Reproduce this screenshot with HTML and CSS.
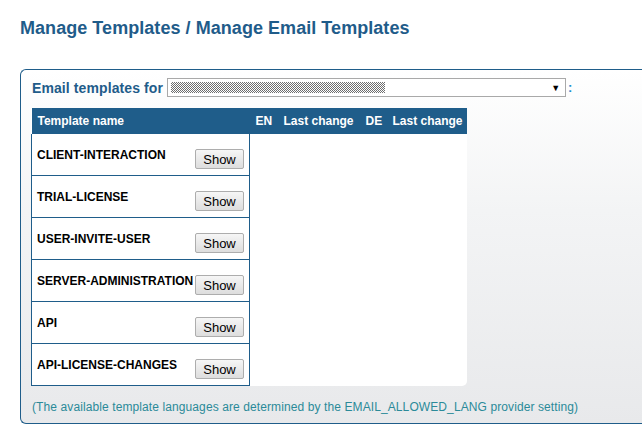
FILE: index.html
```html
<!DOCTYPE html>
<html>
<head>
<meta charset="utf-8">
<link rel="stylesheet" href="styles.css">
</head>
<body>
<h1 class="title">Manage Templates / Manage Email Templates</h1>
<div class="panel">
  <div class="picker">
    <span class="picker-label">Email templates for</span>
    <div class="select">
      <span class="redacted"></span>
      <span class="arrow">&#9660;</span>
    </div>
    <span class="colon">:</span>
  </div>
  <div class="table-wrap">
    <table class="tpl">
      <colgroup>
        <col class="w-name">
        <col class="w-en">
        <col class="w-lc1">
        <col class="w-de">
        <col class="w-lc2">
      </colgroup>
      <thead>
        <tr>
          <th>Template name</th>
          <th>EN</th>
          <th>Last change</th>
          <th>DE</th>
          <th>Last change</th>
        </tr>
      </thead>
      <tbody>
        <tr><td class="c-name"><div class="cell"><span class="lbl">CLIENT-INTERACTION</span><button class="btn">Show</button></div></td><td colspan="4"></td></tr>
        <tr><td class="c-name"><div class="cell"><span class="lbl">TRIAL-LICENSE</span><button class="btn">Show</button></div></td><td colspan="4"></td></tr>
        <tr><td class="c-name"><div class="cell"><span class="lbl">USER-INVITE-USER</span><button class="btn">Show</button></div></td><td colspan="4"></td></tr>
        <tr><td class="c-name"><div class="cell"><span class="lbl">SERVER-ADMINISTRATION</span><button class="btn">Show</button></div></td><td colspan="4"></td></tr>
        <tr><td class="c-name"><div class="cell"><span class="lbl">API</span><button class="btn">Show</button></div></td><td colspan="4"></td></tr>
        <tr><td class="c-name"><div class="cell"><span class="lbl">API-LICENSE-CHANGES</span><button class="btn">Show</button></div></td><td colspan="4"></td></tr>
      </tbody>
    </table>
  </div>
  <p class="note">(The available template languages are determined by the EMAIL_ALLOWED_LANG provider setting)</p>
</div>
</body>
</html>
```

FILE: styles.css
```css
html, body {
  margin: 0;
  padding: 0;
  background: #fff;
  font-family: "Liberation Sans", Arial, sans-serif;
}
.title {
  margin: 0;
  padding: 17px 0 0 20px;
  font-size: 18px;
  font-weight: bold;
  color: #1f5c8a;
  line-height: 22px;
  letter-spacing: 0.05px;
}
.panel {
  margin: 30px 0 0 20px;
  border: 1px solid #1f5d8a;
  border-right: none;
  border-radius: 6px 0 0 6px;
  background: linear-gradient(to bottom, #ffffff 0%, #f3f4f5 40%, #e8e9eb 100%);
  padding: 8px 0 0 10px;
  height: 345px;
  box-sizing: content-box;
}
.picker {
  display: flex;
  align-items: center;
  height: 19px;
}
.picker-label {
  font-size: 14px;
  font-weight: bold;
  color: #1f5c8a;
  margin-left: 1px;
  margin-right: 4px;
  letter-spacing: 0.1px;
}
.select {
  width: 397px;
  height: 17px;
  border: 1px solid #a9a9a9;
  background: #fff;
  display: flex;
  align-items: center;
}
.redacted {
  display: block;
  width: 214px;
  height: 11px;
  margin-left: 3px;
  background: repeating-conic-gradient(#6e6e6e 0 25%, #ffffff 0 50%) 0 0 / 2px 2px;
}
.arrow {
  margin-left: auto;
  margin-right: 5px;
  font-size: 9px;
  color: #000;
}
.colon {
  font-size: 13px;
  font-weight: bold;
  color: #1f8fcf;
  margin-left: 2px;
}
.table-wrap {
  margin-top: 11px;
  width: 436px;
  background: #fff;
  border-radius: 0 0 5px 0;
  overflow: hidden;
}
.tpl {
  border-collapse: collapse;
  table-layout: fixed;
  width: 436px;
}
.w-name { width: 218px; }
.w-en { width: 28px; }
.w-lc1 { width: 82px; }
.w-de { width: 27px; }
.w-lc2 { width: 81px; }
.tpl th {
  background: #1f5d8a;
  color: #fff;
  font-size: 12px;
  font-weight: bold;
  text-align: left;
  height: 26px;
  padding: 0 6px;
  white-space: nowrap;
}
.tpl td {
  padding: 0;
  height: 41px;
  vertical-align: top;
}
.tpl td.c-name {
  border: 1px solid #1f5d8a;
  border-top: none;
}
.cell {
  display: flex;
  align-items: flex-start;
  padding: 14px 5px 0 5px;
}
.lbl {
  font-size: 12px;
  font-weight: bold;
  color: #000;
  line-height: 14px;
  white-space: nowrap;
}
.btn {
  margin-left: auto;
  margin-top: 1px;
  width: 49px;
  height: 20px;
  padding: 0;
  font-family: "Liberation Sans", Arial, sans-serif;
  font-size: 13px;
  color: #000;
  border: 1px solid #adadad;
  border-radius: 2px;
  background: linear-gradient(to bottom, #f6f6f6, #dddddd);
}
.note {
  margin: 14px 0 0 1px;
  font-size: 12px;
  color: #2b8a99;
  letter-spacing: 0.1px;
}
```
